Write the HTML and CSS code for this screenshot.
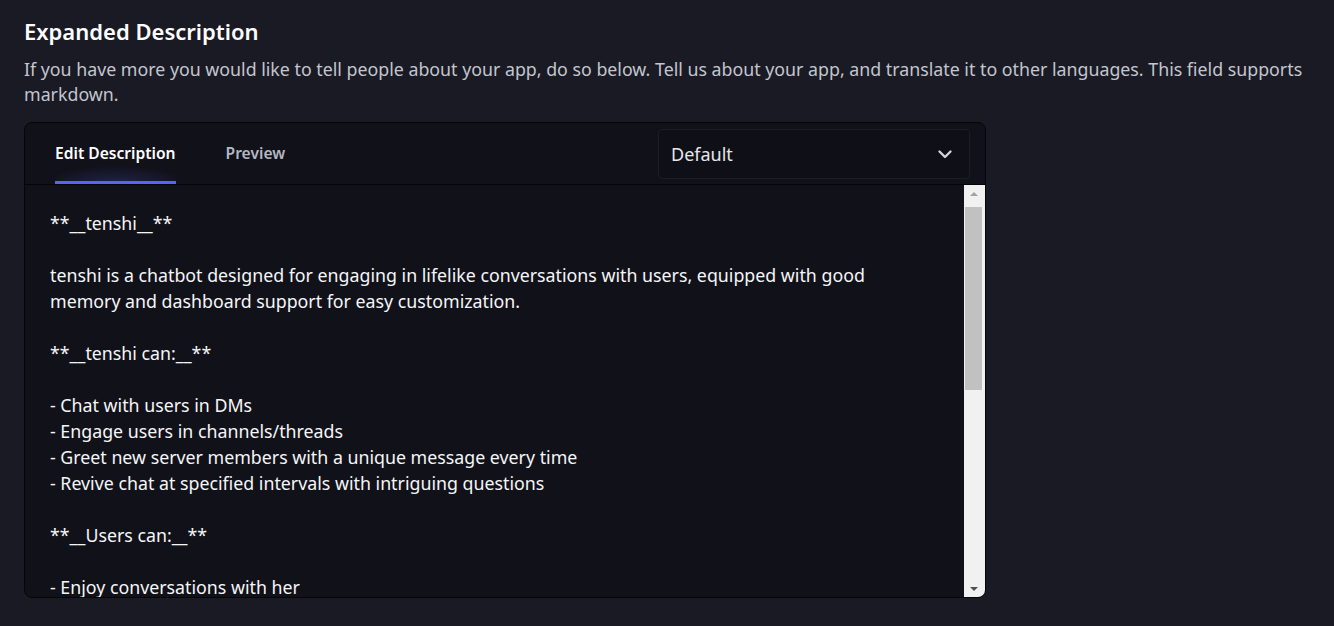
FILE: index.html
```html
<!DOCTYPE html>
<html lang="en">
<head>
<meta charset="utf-8">
<title>Expanded Description</title>
<link rel="stylesheet" href="styles.css">
</head>
<body>
<section class="section">
  <h2 class="title">Expanded Description</h2>
  <p class="desc">If you have more you would like to tell people about your app, do so below. Tell us about your app, and translate it to other languages. This field supports markdown.</p>
  <div class="panel">
    <div class="panel-head">
      <div class="tabs">
        <button class="tab tab-active">Edit Description</button>
        <button class="tab">Preview</button>
      </div>
      <div class="select">
        <span class="select-value">Default</span>
        <svg class="chevron" width="16" height="16" viewBox="0 0 16 16" aria-hidden="true"><path d="M2.5 5.5 L8 11 L13.5 5.5" fill="none" stroke="#d2d3d8" stroke-width="2.4" stroke-linecap="round" stroke-linejoin="round"/></svg>
      </div>
    </div>
    <div class="editor">
      <div class="editor-text">
        <div class="line">**__tenshi__**</div>
        <div class="line"></div>
        <div class="line">tenshi is a chatbot designed for engaging in lifelike conversations with users, equipped with good</div>
        <div class="line">memory and dashboard support for easy customization.</div>
        <div class="line"></div>
        <div class="line">**__tenshi can:__**</div>
        <div class="line"></div>
        <div class="line">- Chat with users in DMs</div>
        <div class="line">- Engage users in channels/threads</div>
        <div class="line">- Greet new server members with a unique message every time</div>
        <div class="line">- Revive chat at specified intervals with intriguing questions</div>
        <div class="line"></div>
        <div class="line">**__Users can:__**</div>
        <div class="line"></div>
        <div class="line">- Enjoy conversations with her</div>
      </div>
      <div class="scrollbar">
        <div class="sb-btn sb-up"><span class="tri-up"></span></div>
        <div class="sb-track"><div class="sb-thumb"></div></div>
        <div class="sb-btn sb-down"><span class="tri-down"></span></div>
      </div>
    </div>
  </div>
</section>
</body>
</html>
```
FILE: styles.css
```css
* { box-sizing: border-box; }
html, body {
  margin: 0;
  height: 100%;
  background: #1a1a24;
  overflow: hidden;
}
body {
  font-family: "Noto Sans", "Open Sans", sans-serif;
  color: #f2f3f5;
}
.section {
  padding: 15px 24px 0 24px;
}
.title {
  margin: 0;
  font-size: 22px;
  line-height: 32px;
  font-weight: 600;
  color: #ffffff;
}
.desc {
  margin: 10px 0 15px 0;
  font-size: 17.8px;
  line-height: 25px;
  color: #c3c6cf;
  max-width: 1290px;
}
.panel {
  width: 962px;
  height: 476px;
  background: #11111a;
  border: 1px solid #050507;
  border-radius: 8px;
  overflow: hidden;
  display: flex;
  flex-direction: column;
}
.panel-head {
  height: 62px;
  flex: none;
  border-bottom: 1px solid #050507;
  display: flex;
  align-items: center;
  justify-content: space-between;
  padding: 0 15px 0 30px;
}
.tabs {
  display: flex;
  gap: 50px;
  height: 100%;
}
.tab {
  position: relative;
  background: none;
  border: none;
  padding: 0 0 2px 0;
  height: 100%;
  font-family: inherit;
  font-size: 15.6px;
  font-weight: 600;
  color: #b5b8c2;
  cursor: pointer;
}
.tab-active {
  color: #ffffff;
  background: radial-gradient(ellipse 60% 30% at 50% 100%, rgba(88, 101, 242, 0.22), rgba(88, 101, 242, 0));
}
.tab-active::after {
  content: "";
  position: absolute;
  left: 0;
  right: 0;
  bottom: 0;
  height: 3px;
  background: #5865f2;
}
.select {
  width: 312px;
  height: 50px;
  border: 1px solid #1c1d25;
  border-radius: 4px;
  background: #0f1017;
  display: flex;
  align-items: center;
  justify-content: space-between;
  padding: 0 16px 0 12px;
}
.select-value {
  font-size: 18px;
  color: #e6e7ea;
}
.chevron { display: block; }
.editor {
  flex: 1;
  display: flex;
  min-height: 0;
}
.editor-text {
  flex: 1;
  overflow: hidden;
  padding: 25px 0 0 25px;
  font-size: 17.8px;
  line-height: 26px;
  color: #f5f6f8;
}
.line {
  height: 26px;
  white-space: pre;
}
.scrollbar {
  width: 21px;
  flex: none;
  background: #f1f1f1;
  display: flex;
  flex-direction: column;
  align-items: center;
  padding-right: 2px;
}
.sb-btn {
  width: 17px;
  height: 17px;
  display: flex;
  align-items: center;
  justify-content: center;
  flex: none;
}
.tri-up {
  width: 0; height: 0;
  border-left: 4px solid transparent;
  border-right: 4px solid transparent;
  border-bottom: 4px solid #a3a3a3;
}
.tri-down {
  width: 0; height: 0;
  border-left: 4px solid transparent;
  border-right: 4px solid transparent;
  border-top: 4px solid #505050;
}
.sb-track {
  flex: 1;
  width: 17px;
  padding-top: 5px;
}
.sb-thumb {
  width: 17px;
  height: 183px;
  background: #c1c1c1;
}
```
